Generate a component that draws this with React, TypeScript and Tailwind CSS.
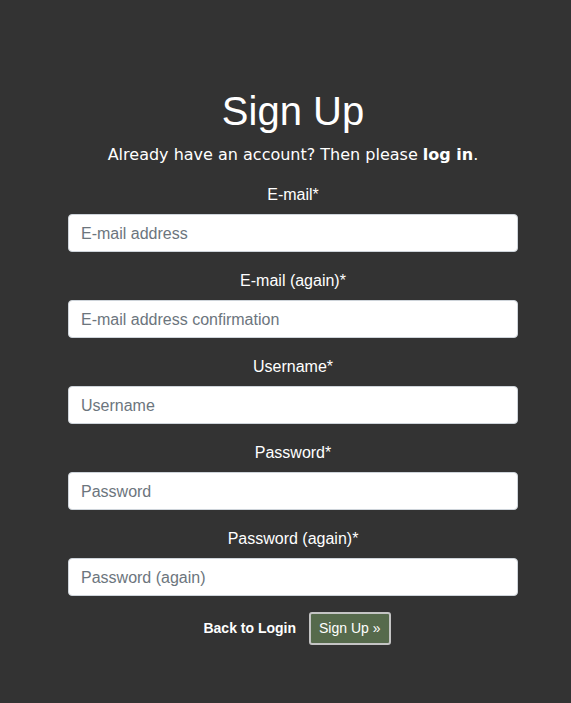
import React from "react";

const fields = [
  { label: "E-mail*", placeholder: "E-mail address", type: "email" },
  { label: "E-mail (again)*", placeholder: "E-mail address confirmation", type: "email" },
  { label: "Username*", placeholder: "Username", type: "text" },
  { label: "Password*", placeholder: "Password", type: "password" },
  { label: "Password (again)*", placeholder: "Password (again)", type: "password" },
];

export default function App() {
  return (
    <div className="min-h-[703px] w-full bg-[#333333] text-white">
      <div className="ml-[68px] w-[450px] pt-[87px] font-['Liberation_Sans',Arial,sans-serif]">
        <h1 className="text-center text-[40px] leading-[48px] font-normal">Sign Up</h1>
        <p className="mt-[8px] text-center text-[16px] leading-[24px] font-['DejaVu_Sans',Verdana,sans-serif]">
          Already have an account? Then please <a className="font-bold">log in</a>.
        </p>
        <form className="mt-[15px] flex flex-col">
          {fields.map((f, i) => (
            <div key={i} className={i === 0 ? "" : "mt-[16px]"}>
              <label className="block pt-[1px] text-center text-[16px] leading-[24px]">{f.label}</label>
              <input
                type={f.type}
                placeholder={f.placeholder}
                className="mt-[7px] block h-[38px] w-full rounded-[4px] border border-[#ced4da] bg-white px-[12px] pt-[1px] text-[16px] text-[#495057] placeholder:text-[#6c757d] outline-none"
              />
            </div>
          ))}
          <div className="mt-[16px] flex items-center justify-center gap-[13px] pl-[8px]">
            <a className="text-[14px] font-bold text-white">Back to Login</a>
            <button
              type="button"
              className="h-[33px] rounded-[3px] border-2 border-[#c4c4c4] bg-[#566a4c] px-[8px] text-[14px] text-white"
            >
              Sign Up »
            </button>
          </div>
        </form>
      </div>
    </div>
  );
}
